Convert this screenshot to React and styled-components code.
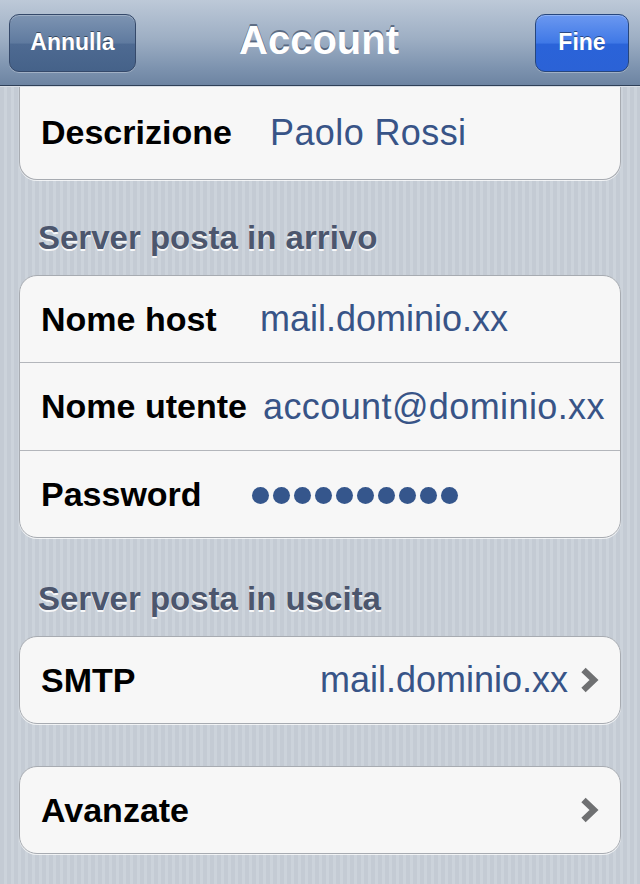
import React from "react";
import styled, { createGlobalStyle } from "styled-components";

const Global = createGlobalStyle`
  html, body { margin: 0; padding: 0; }
  body {
    width: 640px;
    height: 884px;
    overflow: hidden;
    font-family: "Liberation Sans", Arial, Helvetica, sans-serif;
    background-color: #c8cfd7;
    background-image: repeating-linear-gradient(90deg, #c4cbd4 0px, #c4cbd4 4px, #ccd3db 4px, #ccd3db 7px);
  }
`;

const Page = styled.div`
  width: 640px;
  height: 884px;
  display: flex;
  flex-direction: column;
`;

const NavBar = styled.header`
  position: relative;
  z-index: 2;
  height: 86px;
  box-sizing: border-box;
  display: grid;
  grid-template-columns: 1fr auto 1fr;
  align-items: center;
  padding: 0 11px 4px 9px;
  background: linear-gradient(180deg, #bdc9d8 0%, #9eafc4 45%, #7d93af 80%, #6d84a2 100%);
  border-bottom: 1px solid #2f4058;
  box-shadow: 0 1px 0 #d9dee5;
`;

const BarButton = styled.button`
  justify-self: ${(p) => (p.$primary ? "end" : "start")};
  width: ${(p) => p.$width}px;
  height: 58px;
  margin-top: 4px;
  border-radius: 10px;
  border: 1px solid ${(p) => (p.$primary ? "#27467c" : "#35496a")};
  background: ${(p) =>
    p.$primary
      ? "linear-gradient(180deg, #6b98f0 0%, #3f78e6 50%, #2a63d9 52%, #2b62d6 100%)"
      : "linear-gradient(180deg, #7d94b2 0%, #5f7a9f 50%, #4e6a92 52%, #456289 100%)"};
  box-shadow: inset 0 1px 0 rgba(255, 255, 255, 0.25), 0 1px 0 rgba(255, 255, 255, 0.3);
  color: #fff;
  font-family: "Liberation Sans", Arial, sans-serif;
  font-weight: 700;
  font-size: 23px;
  text-shadow: 0 -1px 0 rgba(0, 0, 0, 0.45);
  padding: 0;
  cursor: pointer;
`;

const Title = styled.h1`
  margin: 0;
  font-size: 40px;
  font-weight: 700;
  color: #fff;
  letter-spacing: 0;
  text-shadow: 0 -2px 0 rgba(45, 60, 85, 0.6);
`;

const Card = styled.section`
  margin: 0 19px;
  background: #f7f7f7;
  border: 1px solid #a7abb1;
  border-radius: 18px;
  box-shadow: 0 1px 0 rgba(255, 255, 255, 0.75);
  overflow: hidden;
  ${(p) =>
    p.$clipped &&
    `
    border-top: none;
    border-top-left-radius: 0;
    border-top-right-radius: 0;
  `}
  margin-top: ${(p) => p.$gap || 0}px;
`;

const Row = styled.div`
  height: ${(p) => p.$height || 86}px;
  display: grid;
  grid-template-columns: ${(p) => p.$labelWidth || 220}px 1fr;
  align-items: center;
  padding: 0 22px 0 21px;
  & + & {
    border-top: 1px solid #b3b6bb;
  }
`;

const LinkRow = styled.div`
  height: ${(p) => p.$height || 86}px;
  display: flex;
  align-items: center;
  padding: 0 21px 0 21px;
`;

const Label = styled.span`
  font-size: 34px;
  font-weight: 700;
  color: #000;
  white-space: nowrap;
`;

const Value = styled.span`
  font-size: 36px;
  font-weight: 400;
  color: #385487;
  white-space: nowrap;
  letter-spacing: ${(p) => p.$spacing || 0}px;
  margin-left: ${(p) => (p.$right ? "auto" : "0")};
  margin-right: ${(p) => (p.$right ? "12px" : "0")};
`;

const Dots = styled.span`
  display: flex;
  gap: 4px;
  margin-top: 2px;
`;

const Dot = styled.span`
  width: 17px;
  height: 17px;
  border-radius: 50%;
  background: #35568c;
`;

const Chevron = styled.svg`
  flex: none;
  display: block;
  width: 19px;
  height: 26px;
  margin-left: ${(p) => (p.$push ? "auto" : "0")};
`;

const SectionHeader = styled.h2`
  margin: ${(p) => p.$top}px 0 17px 38px;
  height: 40px;
  line-height: 40px;
  font-size: 33px;
  font-weight: 700;
  color: #4c566d;
  text-shadow: 0 2px 0 rgba(255, 255, 255, 0.85);
`;

const Arrow = ({ push }) => (
  <Chevron $push={push} viewBox="0 0 19 26">
    <polyline
      points="3.5,3 14,13 3.5,23"
      fill="none"
      stroke="#6f7072"
      strokeWidth="6.2"
      strokeLinejoin="miter"
      strokeMiterlimit="4"
    />
  </Chevron>
);

export default function App() {
  return (
    <Page>
      <Global />
      <NavBar>
        <BarButton $width={127}>Annulla</BarButton>
        <Title>Account</Title>
        <BarButton $primary $width={94}>Fine</BarButton>
      </NavBar>

      <Card $clipped>
        <Row $height={93} $labelWidth={229}>
          <Label>Descrizione</Label>
          <Value $spacing={0.4}>Paolo Rossi</Value>
        </Row>
      </Card>

      <SectionHeader $top={38}>Server posta in arrivo</SectionHeader>
      <Card>
        <Row $labelWidth={219}>
          <Label>Nome host</Label>
          <Value>mail.dominio.xx</Value>
        </Row>
        <Row $height={87} $labelWidth={222}>
          <Label>Nome utente</Label>
          <Value $spacing={0.4}>account@dominio.xx</Value>
        </Row>
        <Row $labelWidth={211}>
          <Label>Password</Label>
          <Dots aria-label="password">
            {Array.from({ length: 10 }).map((_, i) => (
              <Dot key={i} />
            ))}
          </Dots>
        </Row>
      </Card>

      <SectionHeader $top={41}>Server posta in uscita</SectionHeader>
      <Card>
        <LinkRow>
          <Label>SMTP</Label>
          <Value $right>mail.dominio.xx</Value>
          <Arrow />
        </LinkRow>
      </Card>

      <Card $gap={42}>
        <LinkRow $height={86}>
          <Label>Avanzate</Label>
          <Arrow push />
        </LinkRow>
      </Card>
    </Page>
  );
}
